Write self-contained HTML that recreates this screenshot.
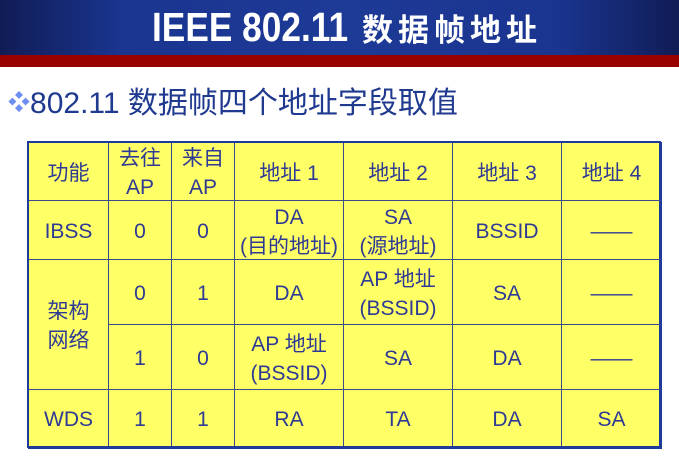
<!DOCTYPE html>
<html><head><meta charset="utf-8"><style>
*{margin:0;padding:0;box-sizing:border-box}
body{width:679px;height:462px;background:#fff;position:relative;overflow:hidden;font-family:"Liberation Sans","Noto Sans CJK SC",sans-serif}
.hdr{position:absolute;left:0;top:0;width:679px;height:55px;background:linear-gradient(90deg,#101c55 0%,#1a3590 18%,#1d3a96 50%,#1a3590 82%,#101c55 100%)}
.red{position:absolute;left:0;top:55px;width:679px;height:12px;background:#990000}
.t1{position:absolute;left:152px;top:4px;color:#fff;font-weight:bold;font-size:41px;line-height:46px;transform:scaleX(0.86);transform-origin:left center;white-space:nowrap}
.t2{position:absolute;left:362px;top:10px;color:#fff;font-weight:bold;font-size:31px;line-height:36px;letter-spacing:5px;white-space:nowrap;font-family:"Noto Sans CJK SC",sans-serif}
.sub{position:absolute;left:8px;top:84px;color:#1f3a8f;font-size:30px;line-height:38px;white-space:nowrap}
.sub b{color:#6e8ef0;font-weight:normal;font-size:22px;vertical-align:3px}
.tbl{position:absolute;left:27px;top:141px;width:634px;height:307px;background:#ffff66;border:2px solid #1e3a9a;box-shadow:1px 1px 0 #1e3a9a}
.c{position:absolute;display:flex;align-items:center;justify-content:center;text-align:center;color:#2e3a94;font-size:21px;line-height:29px;padding-top:3px;border-right:1px solid #3a4c8c;border-bottom:1px solid #3a4c8c;white-space:nowrap}
</style></head><body>
<div class="hdr"></div><div class="red"></div>
<div class="t1">IEEE 802.11</div><div class="t2">数据帧地址</div>
<div class="sub"><b>❖</b>802.11 数据帧四个地址字段取值</div>
<div class="tbl">
<div class="c" style="left:0;top:0;width:80px;height:58px">功能</div>
<div class="c" style="left:80px;top:0;width:63px;height:58px">去往<br>AP</div>
<div class="c" style="left:143px;top:0;width:63px;height:58px">来自<br>AP</div>
<div class="c" style="left:206px;top:0;width:109px;height:58px">地址 1</div>
<div class="c" style="left:315px;top:0;width:109px;height:58px">地址 2</div>
<div class="c" style="left:424px;top:0;width:109px;height:58px">地址 3</div>
<div class="c" style="left:533px;top:0;width:99px;height:58px;border-right:none">地址 4</div>

<div class="c" style="left:0;top:58px;width:80px;height:59px">IBSS</div>
<div class="c" style="left:80px;top:58px;width:63px;height:59px">0</div>
<div class="c" style="left:143px;top:58px;width:63px;height:59px">0</div>
<div class="c" style="left:206px;top:58px;width:109px;height:59px">DA<br>(目的地址)</div>
<div class="c" style="left:315px;top:58px;width:109px;height:59px">SA<br>(源地址)</div>
<div class="c" style="left:424px;top:58px;width:109px;height:59px">BSSID</div>
<div class="c" style="left:533px;top:58px;width:99px;height:59px;border-right:none">——</div>

<div class="c" style="left:0;top:117px;width:80px;height:130px">架构<br>网络</div>
<div class="c" style="left:80px;top:117px;width:63px;height:65px">0</div>
<div class="c" style="left:143px;top:117px;width:63px;height:65px">1</div>
<div class="c" style="left:206px;top:117px;width:109px;height:65px">DA</div>
<div class="c" style="left:315px;top:117px;width:109px;height:65px">AP 地址<br>(BSSID)</div>
<div class="c" style="left:424px;top:117px;width:109px;height:65px">SA</div>
<div class="c" style="left:533px;top:117px;width:99px;height:65px;border-right:none">——</div>

<div class="c" style="left:80px;top:182px;width:63px;height:65px">1</div>
<div class="c" style="left:143px;top:182px;width:63px;height:65px">0</div>
<div class="c" style="left:206px;top:182px;width:109px;height:65px">AP 地址<br>(BSSID)</div>
<div class="c" style="left:315px;top:182px;width:109px;height:65px">SA</div>
<div class="c" style="left:424px;top:182px;width:109px;height:65px">DA</div>
<div class="c" style="left:533px;top:182px;width:99px;height:65px;border-right:none">——</div>

<div class="c" style="left:0;top:247px;width:80px;height:56px;border-bottom:none">WDS</div>
<div class="c" style="left:80px;top:247px;width:63px;height:56px;border-bottom:none">1</div>
<div class="c" style="left:143px;top:247px;width:63px;height:56px;border-bottom:none">1</div>
<div class="c" style="left:206px;top:247px;width:109px;height:56px;border-bottom:none">RA</div>
<div class="c" style="left:315px;top:247px;width:109px;height:56px;border-bottom:none">TA</div>
<div class="c" style="left:424px;top:247px;width:109px;height:56px;border-bottom:none">DA</div>
<div class="c" style="left:533px;top:247px;width:99px;height:56px;border:none">SA</div>
</div>
</body></html>
